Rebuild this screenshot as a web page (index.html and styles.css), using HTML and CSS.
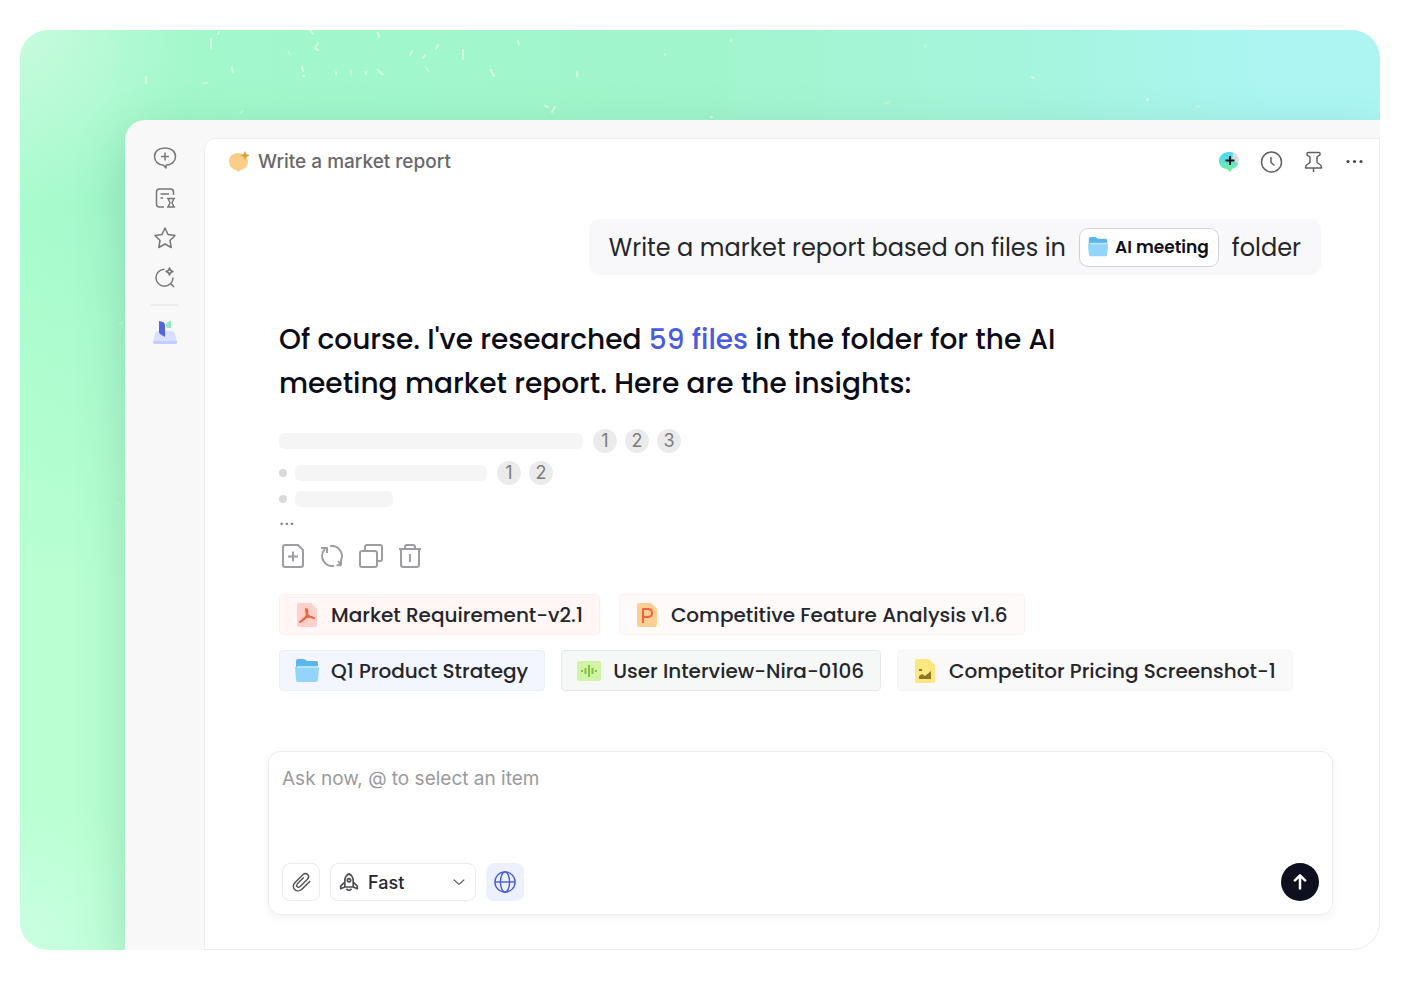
FILE: index.html
```
<!DOCTYPE html>
<html lang="en">
<head>
  <meta charset="UTF-8" />
  <meta name="viewport" content="width=device-width, initial-scale=1.0"/>
  <title>Write a market report</title>
  <link rel="stylesheet" href="styles.css">
</head>
<body>
  <!-- shared icons -->
  <svg class="defs" aria-hidden="true">
    <symbol id="folder" viewBox="0 0 24 24">
      <path d="M1 2q0-2 2-2h6l3 2h9q2 0 2 2v12H1z" fill="#5ab5ec"/>
      <path d="M0 8h24l-1 13q0 2-2 2H3q-2 0-2-2z" fill="#93d4fd"/>
      <path d="M2 7h21v2H2z" fill="#b8e3fc"/>
    </symbol>
  </svg>

  <div class="card">
    <svg class="sparks" aria-hidden="true">
      <g fill="none" stroke="#e4ffe0" stroke-linecap="round" stroke-width="2" opacity="0.8">
        <path d="M191 9v9M199 2l-1 2M126 47v6M212 38l1 4M282 37l1 4M283 46h1M298 13l-3 5l3 2M291 1l2 3M316 42v2M346 42v2M358 40l4 4M358 3l1 4M392 21l-2 4M405 25l-2 3M418 15l-2 4M443 20v9M471 40l3 6M498 11l1 3M557 42v4M645 24v1M711 10v1M535 77l-3 5M525 76l3 1M691 87h1M1012 47l2 1M1127 69l1 1"/>
        <path d="M182 53h6M220 83l3-2M268 21l2 4M331 40v5M405 36l4 6M864 74l5-2M905 15v2M1176 77l3-1M99 294l3-1M97 473h2" stroke-width="1"/>
      </g>
    </svg>

    <div class="window">
      <nav class="sidebar" aria-label="Main">
        <button type="button" aria-label="New chat">
          <svg viewBox="0 0 24 24"><path d="M12 2C5.500 2 1.500 5.500 1.500 10.500S5.500 19 10.500 19.300L13 22v-2.800C18.500 18.800 22.500 15.500 22.500 10.500S18.500 2 12 2z"/><path d="M12 6.500v8M8 10.500h8"/></svg>
        </button>
        <button type="button" aria-label="Tasks">
          <svg viewBox="0 0 24 24"><path d="M20.500 9V6q0-3-3-3h-11q-3 0-3 3v12q0 3 3 3H11M7.500 8H16M7.500 12H10"/><path d="M14 12.500h8M14 21h8M15.500 12.500c0 2.500 1.500 3.500 1.500 4.200s-1.500 1.800-1.500 4.300M20.500 12.500c0 2.500-1.500 3.500-1.500 4.200s1.500 1.800 1.500 4.300"/></svg>
        </button>
        <button type="button" aria-label="Favorites">
          <svg viewBox="0 0 24 24"><path d="M12 2l3 6.500 7 1-5 5 1.200 7L12 18l-6.200 3.500L7 14.500l-5-5 7-1z"/></svg>
        </button>
        <button type="button" aria-label="Search">
          <svg viewBox="0 0 24 24"><path d="M11.500 3.200A8.500 8.500 0 1 0 20 11.500M17.500 17.500L21 21M16.500 2c.5 2.500 1 3 3.500 3.500-2.500.5-3 1-3.500 3.500-.5-2.500-1-3-3.500-3.500 2.500-.5 3-1 3.500-3.500z"/></svg>
        </button>
        <hr>
        <button type="button" class="library" aria-label="Library">
          <svg viewBox="0 0 26 26"><path d="M3 15q1-3 4-3h12q3 0 4 3l2 8q0 2-2 2H3q-2 0-2-2z" fill="#d9dfff"/><path d="M1 22h24v1q0 2-2 2H3q-2 0-2-2z" fill="#c3ccfc"/><path d="M7 2l4 1q2 1 2 3v12l-5-3q-1-1-1-2z" fill="#5265e4"/><path d="M14 6q1-4 5-4v7h-3q-2 0-2-3z" fill="#91e8c3"/></svg>
        </button>
      </nav>

      <main class="main">
        <header class="topbar">
          <svg class="topic-icon" viewBox="0 0 22 22" aria-hidden="true"><path d="M10 2C4 2 1 6 1 10.500S4 18 8 19l3 2 1-2c5-.5 8-4 8-8.500S16 2 10 2z" fill="#fbcd87"/><path d="M17 0l1.500 3L22 4.500 18.500 6 17 9l-1.500-3L12 4.500 15.500 3z" fill="#dba545"/></svg>
          <h1>Write a market report</h1>
          <div class="top-actions">
            <button type="button" aria-label="New chat">
              <svg viewBox="0 0 24 24">
                <defs><linearGradient id="bubble" x1="0" y1="0" x2="0" y2="1"><stop offset="0.200" stop-color="#51dcee"/><stop offset="0.900" stop-color="#72efa0"/></linearGradient></defs>
                <path d="M13 2q8 0 9 8-1 6-6 8z" fill="#dcdcdf"/><path d="M12 2C6 2 2 6 2 11s4 8 8 8l3 3 2-3c4-1 6-3 6-6l-6-2 1-8q-2-1-4-1z" fill="url(#bubble)"/><path d="M13 6v9M8.500 10.500h9" stroke="#10141f" stroke-width="2"/>
              </svg>
            </button>
            <button type="button" aria-label="History">
              <svg viewBox="0 0 24 24"><circle cx="12.500" cy="12" r="10"/><path d="M12 7v5.500l3.500 3"/></svg>
            </button>
            <button type="button" aria-label="Pin">
              <svg viewBox="0 0 24 24"><path d="M7 2.500h11q1 0 1 1v1q0 1-1 1l-2 1.500v5.500l3.500 2.500q1 1 1 3h-16q0-2 1-3L9 12.500V7L7 5.500q-1 0-1-1v-1q0-1 1-1zM12.500 18v4"/></svg>
            </button>
            <button type="button" aria-label="More">
              <svg viewBox="0 0 24 24"><g fill="#4a4a4e" stroke="none"><circle cx="5" cy="11.500" r="1.600"/><circle cx="11.500" cy="11.500" r="1.600"/><circle cx="18" cy="11.500" r="1.600"/></g></svg>
            </button>
          </div>
        </header>

        <div class="question">
          <span>Write a market report based on files in</span>
          <a href="#" class="folder-tag"><svg aria-hidden="true"><use href="#folder"/></svg>AI meeting</a>
          <span>folder</span>
        </div>

        <section class="answer">
          <p class="answer-text">Of course. I've researched <a href="#">59 files</a> in the folder for the AI<br>meeting market report. Here are the insights:</p>

          <div class="line">
            <span class="bar bar-long"></span>
            <a href="#" class="cite">1</a><a href="#" class="cite">2</a><a href="#" class="cite">3</a>
          </div>
          <div class="line">
            <span class="dot"></span><span class="bar bar-medium"></span>
            <a href="#" class="cite">1</a><a href="#" class="cite">2</a>
          </div>
          <div class="line line-short">
            <span class="dot"></span><span class="bar bar-small"></span>
          </div>
          <p class="more">...</p>

          <div class="actions">
            <button type="button" aria-label="Save as note">
              <svg viewBox="0 0 24 24"><path d="M4 1h13l5 5v15q0 2-2 2H4q-2 0-2-2V3q0-2 2-2zM12 7.500v10M7 12.500h10"/></svg>
            </button>
            <button type="button" aria-label="Regenerate">
              <svg viewBox="0 0 24 24"><path d="M10 2.200a10 10 0 0 1 11 14v5M21.500 21.200h-5M21 21l-3-4M14 21.800A10 10 0 0 1 5 5M1 4h6v5"/></svg>
            </button>
            <button type="button" aria-label="Copy">
              <svg viewBox="0 0 24 24"><rect x="1" y="7" width="17" height="16" rx="2"/><path d="M6 7V3q0-2 2-2h13q2 0 2 2v12q0 2-2 2h-3"/></svg>
            </button>
            <button type="button" aria-label="Delete">
              <svg viewBox="0 0 24 24"><path d="M1 5h22M3 5v16q0 2 2 2h14q2 0 2-2V5M7 5V3q0-2 2-2h6q2 0 2 2v2M12 10v8"/></svg>
            </button>
          </div>

          <div class="files files-wide">
            <a href="#" class="file pdf">
              <svg viewBox="0 0 24 24" aria-hidden="true"><path d="M4 0h12l6 6v16q0 2-2 2H4q-2 0-2-2V2q0-2 2-2z" fill="#ffcfca"/><path d="M11 6q2 0 1 5t-7 8M11 6q0 5 3 7t5 2M8 16q5-3 9-2" fill="none" stroke="#e76845" stroke-width="2" stroke-linecap="round"/></svg>
              Market Requirement-v2.1
            </a>
            <a href="#" class="file ppt">
              <svg viewBox="0 0 24 24" aria-hidden="true"><path d="M4 0h12l6 6v16q0 2-2 2H4q-2 0-2-2V2q0-2 2-2z" fill="#ffce91"/><path d="M8 20V6h5q4 0 4 4t-4 4H8" fill="none" stroke="#ea6547" stroke-width="2"/></svg>
              Competitive Feature Analysis v1.6
            </a>
          </div>
          <div class="files">
            <a href="#" class="file dir">
              <svg aria-hidden="true"><use href="#folder"/></svg>
              Q1 Product Strategy
            </a>
            <a href="#" class="file audio">
              <svg viewBox="0 0 24 24" aria-hidden="true"><rect y="2" width="24" height="20" rx="2" fill="#d0f3a6"/><path d="M5 11v2M8.500 9v6M12 6v12M15.500 9v6M19 11v2" stroke="#83bf43" stroke-width="2"/></svg>
              User Interview-Nira-0106
            </a>
            <a href="#" class="file image">
              <svg viewBox="0 0 24 24" aria-hidden="true"><path d="M4 0h12l6 6v16q0 2-2 2H4q-2 0-2-2V2q0-2 2-2z" fill="#fee780"/><path d="M6 20v-3l3-2 3 2 6-5v8zM6 10h3v2H6z" fill="#8d7625"/></svg>
              Competitor Pricing Screenshot-1
            </a>
          </div>
        </section>

        <form class="composer">
          <textarea aria-label="Message" placeholder="Ask now, @ to select an item"></textarea>
          <div class="toolbar">
            <button type="button" class="tool" aria-label="Attach file">
              <svg viewBox="0 0 24 24"><path d="M22 11l-9 9c-5.500 5-13-2-7.500-7.500L14 4c4-3.500 8.500 1.500 5 5l-8 8c-2.500 2-5-.5-3-3L15 7"/></svg>
            </button>
            <div class="mode">
              <svg viewBox="0 0 24 24" aria-hidden="true"><path d="M7 18V9q1-5 5-7 4 2 5 7v9zM7 12l-5 5v3l5-2M17 12l5 5v3l-5-2M9 20q3 4 6 0"/><circle cx="12" cy="10" r="2"/></svg>
              <select aria-label="Mode">
                <option>Fast</option>
                <option>Deep</option>
              </select>
              <svg class="chevron" viewBox="0 0 24 24" aria-hidden="true"><path d="M3 8l9 8 9-8"/></svg>
            </div>
            <button type="button" class="tool web" aria-label="Search the web">
              <svg viewBox="0 0 24 24"><circle cx="12" cy="12" r="11"/><ellipse cx="12" cy="12" rx="5" ry="11"/><path d="M1 12h22"/></svg>
            </button>
            <button type="submit" class="send" aria-label="Send">
              <svg viewBox="0 0 24 24"><path d="M12 21V4M5 11l7-7 7 7"/></svg>
            </button>
          </div>
        </form>
      </main>
    </div>
  </div>
</body>
</html>
```
FILE: styles.css
```
* {
  box-sizing: border-box;
}
body {
  font-family: "Poppins", Inter, "Liberation Sans", sans-serif;
  background-color: #fff;
  color: #25262a;
  margin: 0;
  padding: 30px 32px 36px 20px;
}
a {
  color: inherit;
  text-decoration: none;
}
button {
  display: flex;
  align-items: center;
  justify-content: center;
  padding: 0;
  border: none;
  background: none;
  color: inherit;
  cursor: pointer;
}
svg {
  flex: none;
  fill: none;
  stroke: currentColor;
  stroke-width: 1.5;
  stroke-linejoin: round;
}
.defs {
  display: block;
  width: 0;
  height: 0;
}
symbol path,
.topic-icon,
.library svg,
.top-actions button:first-child svg,
.file svg {
  stroke: none;
}
.card {
  position: relative;
  display: flex;
  min-height: calc(100vh - 66px);
  padding: 90px 0 0 105px;
  border-radius: 28px;
  overflow: hidden;
  background: radial-gradient(circle at 0 0, #c6fbde, transparent 180px),
    radial-gradient(circle at 0 100%, #caffe2, transparent 160px),
    linear-gradient(180deg, transparent 180px, #b8ffd2 60%) 0 0 / 105px 100% no-repeat,
    linear-gradient(90deg, #a8fbcd 0, #a2f8cb 110px, #a2f6cd 50%, #a6f5df 75%, #acf5f3 92%);
}
.sparks {
  position: absolute;
  top: 0;
  left: 0;
  width: 100%;
  height: 100%;
}
.window {
  position: relative;
  display: flex;
  flex: 1;
  min-width: 0;
  padding-top: 18px;
  border-radius: 20px 0 0 0;
  background-color: #f8f8f8;
  box-shadow: 0 16px 48px rgba(50, 130, 90, 0.25);
}
.sidebar {
  display: flex;
  flex-direction: column;
  align-items: center;
  gap: 16px;
  width: 79px;
  padding-top: 8px;
  color: #77777a;
}
.sidebar svg {
  width: 24px;
  height: 24px;
}
.sidebar hr {
  width: 27px;
  margin: -2px 0 -3px;
  border: none;
  border-top: 2px solid #ececec;
}
.library svg {
  width: 26px;
  height: 26px;
}
.main {
  display: flex;
  flex: 1;
  flex-direction: column;
  min-width: 0;
  border: 1px solid #ededee;
  border-radius: 12px 0 28px 0;
  background-color: #fff;
}
.topbar {
  display: flex;
  align-items: center;
  height: 45px;
  padding: 0 12px 0 23px;
}
.topic-icon {
  width: 22px;
  height: 22px;
}
.topbar h1 {
  margin: 0 0 0 8px;
  font-family: Inter, sans-serif;
  font-size: 19px;
  font-weight: 500;
  color: #68686b;
}
.top-actions {
  display: flex;
  gap: 18px;
  margin-left: auto;
  color: #606064;
}
.top-actions svg {
  width: 24px;
  height: 24px;
}
.question {
  display: flex;
  align-items: center;
  align-self: flex-end;
  gap: 13px;
  height: 56px;
  margin: 35px 58px 0 0;
  padding: 0 20px;
  border-radius: 10px;
  background-color: #f8f8fa;
  font-size: 24px;
}
.folder-tag {
  display: flex;
  align-items: center;
  gap: 7px;
  height: 39px;
  padding: 0 9px 0 8px;
  border: 1px solid #d2d2d5;
  border-radius: 9px;
  background-color: #fff;
  color: #10111d;
  font-size: 17px;
  font-weight: 600;
}
.folder-tag svg {
  width: 20px;
  height: 20px;
}
.answer {
  padding: 43px 72px 0 74px;
}
.answer p {
  margin: 0;
}
.answer .answer-text {
  margin-bottom: 23px;
  color: #0c0c18;
  font-size: 28px;
  font-weight: 500;
  line-height: 44px;
}
.answer-text a {
  color: #4b5be0;
}
.line {
  display: flex;
  align-items: center;
  gap: 8px;
  height: 24px;
  margin-bottom: 8px;
}
.line-short {
  height: 16px;
  margin-top: -2px;
}
.bar {
  height: 16px;
  margin-right: 2px;
  border-radius: 6px;
  background-color: #f5f5f6;
}
.bar-long {
  width: 304px;
}
.bar-medium {
  width: 192px;
}
.bar-small {
  width: 98px;
}
.dot {
  width: 8px;
  height: 8px;
  border-radius: 50%;
  background-color: #d9d9da;
}
.cite {
  width: 24px;
  border-radius: 50%;
  background-color: #ebebec;
  color: #7b7b7e;
  font-family: Inter, sans-serif;
  font-size: 18px;
  line-height: 24px;
  text-align: center;
}
.more {
  color: #6e6e72;
  font-family: Inter, sans-serif;
  font-size: 18px;
  line-height: 8px;
}
.actions {
  display: flex;
  gap: 15px;
  margin: 21px 0 26px 2px;
  color: #9d9da1;
}
.actions svg {
  width: 24px;
  height: 24px;
  stroke-width: 2;
}
.files {
  display: flex;
  gap: 16px;
  margin-bottom: 15px;
  white-space: nowrap;
}
.files-wide {
  gap: 19px;
}
.file {
  display: flex;
  align-items: center;
  gap: 12px;
  height: 41px;
  padding: 0 16px 0 15px;
  border: 1px solid transparent;
  border-radius: 4px;
  font-size: 20px;
  font-weight: 500;
}
.file svg {
  width: 24px;
  height: 24px;
}
.pdf {
  border-color: #fdeeed;
  background-color: #fff6f5;
}
.ppt {
  border-color: #fcf1ef;
  background-color: #fefafa;
}
.dir {
  border-color: #e8edff;
  background-color: #f3f6ff;
}
.audio {
  border-color: #e4e9e5;
  background-color: #f5f8f6;
}
.image {
  border-color: #f4f4f4;
  background-color: #f9f9f9;
}
.composer {
  margin: 45px 46px 34px 63px;
  padding: 15px 13px 13px 13px;
  border: 1px solid #ececee;
  border-radius: 12px;
  box-shadow: 0 3px 10px rgba(0, 0, 0, 0.05);
}
.composer textarea {
  display: block;
  width: 100%;
  height: 96px;
  padding: 0;
  border: none;
  outline: none;
  resize: none;
  background: none;
  font-family: Inter, sans-serif;
  font-size: 19px;
  line-height: 24px;
}
.composer textarea::placeholder {
  color: #9a9a9e;
}
.toolbar {
  display: flex;
  align-items: center;
  gap: 10px;
}
.tool,
.mode {
  height: 38px;
  border: 1px solid #ebebed;
  border-radius: 8px;
  color: #4e4e52;
}
.tool {
  width: 38px;
}
.tool svg {
  width: 22px;
  height: 22px;
}
.mode {
  position: relative;
  display: flex;
  align-items: center;
  width: 146px;
  padding-left: 8px;
}
.mode svg {
  width: 20px;
  height: 20px;
  stroke-width: 2;
}
.mode select {
  flex: 1;
  height: 100%;
  padding: 0 0 0 9px;
  border: none;
  outline: none;
  appearance: none;
  background: none;
  color: #25262a;
  font-family: Inter, sans-serif;
  font-size: 18px;
  font-weight: 500;
}
.mode .chevron {
  position: absolute;
  right: 9px;
  width: 14px;
  height: 14px;
  pointer-events: none;
}
.web {
  border-color: #edf0ff;
  background-color: #edf0ff;
  color: #4659d8;
}
.send {
  width: 38px;
  height: 38px;
  margin-left: auto;
  border-radius: 50%;
  background-color: #0e1020;
  color: #fff;
}
.send svg {
  width: 20px;
  height: 20px;
  stroke-width: 3;
}
```
